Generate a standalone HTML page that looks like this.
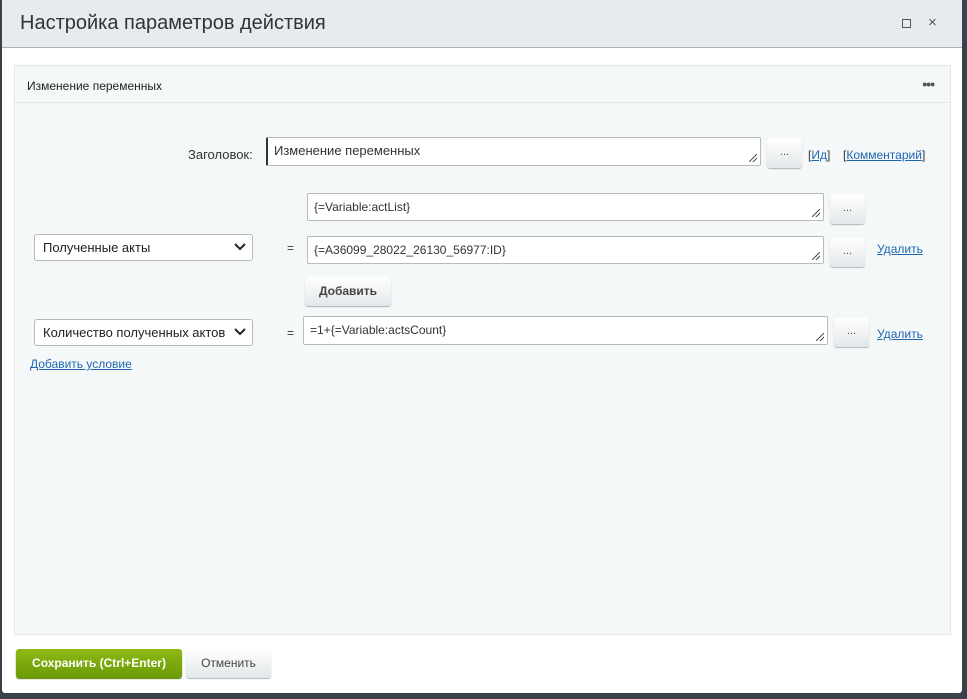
<!DOCTYPE html>
<html><head><meta charset="utf-8"><style>
*{box-sizing:border-box;margin:0;padding:0}
body{width:967px;height:699px;background:#3a4148;font-family:"Liberation Sans","Noto Sans CJK SC",sans-serif;position:relative;overflow:hidden}
.win{position:absolute;left:2px;top:0;width:960px;height:693px;background:#fff;border-radius:0 0 3px 3px}
.hdr{position:absolute;left:0;top:0;width:960px;height:48px;background:#e5ebee;border-bottom:1px solid #a9b0b4}
.hdr .t{position:absolute;left:18px;top:12px;font-size:20px;color:#333}
.panel{position:absolute;left:12px;top:65px;width:937px;height:570px;background:#f5f8f9;border:1px solid #e2e7ea}
.ph{height:37px;border-bottom:1px solid #e2e7ea;font-size:12px;color:#222;padding:13px 0 0 12px}
.a{position:absolute;font-size:12px;color:#333}
.inp{position:absolute;background:#fff;border:1px solid #b5babd;border-radius:2px;font-size:12px;color:#333;padding:0 0 0 6px;line-height:26px}
.inp:after{content:"";position:absolute;right:3px;bottom:3px;width:8px;height:8px;background:linear-gradient(135deg,transparent 45%,#555 45%,#555 55%,transparent 55%,transparent 70%,#555 70%,#555 80%,transparent 80%)}
.dot{position:absolute;width:35px;height:29px;border-radius:3px;background:linear-gradient(#fff,#e3e7e9);box-shadow:0 1px 1px #b0b5b8;font-size:11px;text-align:center;line-height:26px;color:#555}
.sel{position:absolute;background:#fff;border:1px solid #b5babd;border-radius:3px;height:27px;font-size:13px;color:#222;padding-left:8px;line-height:25px}
.sel svg{position:absolute;right:6px;top:8px}
.lnk{position:absolute;font-size:12px;color:#2067b0;text-decoration:underline}
.btn{position:absolute;border-radius:3px;font-size:12px;font-weight:bold;text-align:center}
</style></head><body>
<div class="win">
<div class="hdr"><div class="t">Настройка параметров действия</div>
<div style="position:absolute;left:900px;top:19px;width:9px;height:9px;border:1px solid #555"></div>
<div style="position:absolute;left:926px;top:14px;font-size:15px;color:#555">×</div></div>
<div class="panel"><div class="ph">Изменение переменных</div>
<div style="position:absolute;right:16px;top:10px;font-size:14px;color:#555;letter-spacing:-1px;font-weight:bold">•••</div>
</div>
<div class="a" style="left:186px;top:147px;font-size:13px">Заголовок:</div>
<div class="inp" style="left:264px;top:137px;width:495px;height:29px;font-size:13px;border-left:2px solid #333">Изменение переменных</div>
<div class="dot" style="left:765px;top:139px">...</div>
<div class="a" style="left:806px;top:148px">[<span style="color:#2067b0;text-decoration:underline">Ид</span>]</div>
<div class="a" style="left:841px;top:148px">[<span style="color:#2067b0;text-decoration:underline">Комментарий</span>]</div>

<div class="inp" style="left:305px;top:193px;width:517px;height:28px">{=Variable:actList}</div>
<div class="dot" style="left:828px;top:195px">...</div>
<div class="sel" style="left:32px;top:234px;width:219px">Полученные акты<svg width="12" height="8"><path d="M1 1l5 5 5-5" stroke="#222" stroke-width="2" fill="none"/></svg></div>
<div class="a" style="left:285px;top:241px">=</div>
<div class="inp" style="left:305px;top:236px;width:517px;height:28px">{=A36099_28022_26130_56977:ID}</div>
<div class="dot" style="left:828px;top:238px">...</div>
<div class="lnk" style="left:875px;top:242px">Удалить</div>
<div class="btn" style="left:303px;top:277px;width:86px;height:29px;background:linear-gradient(#fff,#e3e7e9);box-shadow:0 1px 1px #b0b5b8;color:#444;line-height:29px">Добавить</div>

<div class="sel" style="left:32px;top:319px;width:219px">Количество полученных актов<svg width="12" height="8"><path d="M1 1l5 5 5-5" stroke="#222" stroke-width="2" fill="none"/></svg></div>
<div class="a" style="left:285px;top:326px">=</div>
<div class="inp" style="left:301px;top:316px;width:525px;height:29px">=1+{=Variable:actsCount}</div>
<div class="dot" style="left:832px;top:318px">...</div>
<div class="lnk" style="left:875px;top:327px">Удалить</div>
<div class="lnk" style="left:28px;top:357px">Добавить условие</div>

<div class="btn" style="left:14px;top:649px;width:166px;height:29px;background:linear-gradient(#8fba15,#6a9a05);color:#fff;line-height:29px;box-shadow:0 1px 1px #557a00">Сохранить (Ctrl+Enter)</div>
<div class="btn" style="left:184px;top:649px;width:85px;height:29px;background:linear-gradient(#fff,#e3e7e9);color:#444;line-height:29px;box-shadow:0 1px 1px #b0b5b8;font-weight:normal">Отменить</div>
</div>
</body></html>
